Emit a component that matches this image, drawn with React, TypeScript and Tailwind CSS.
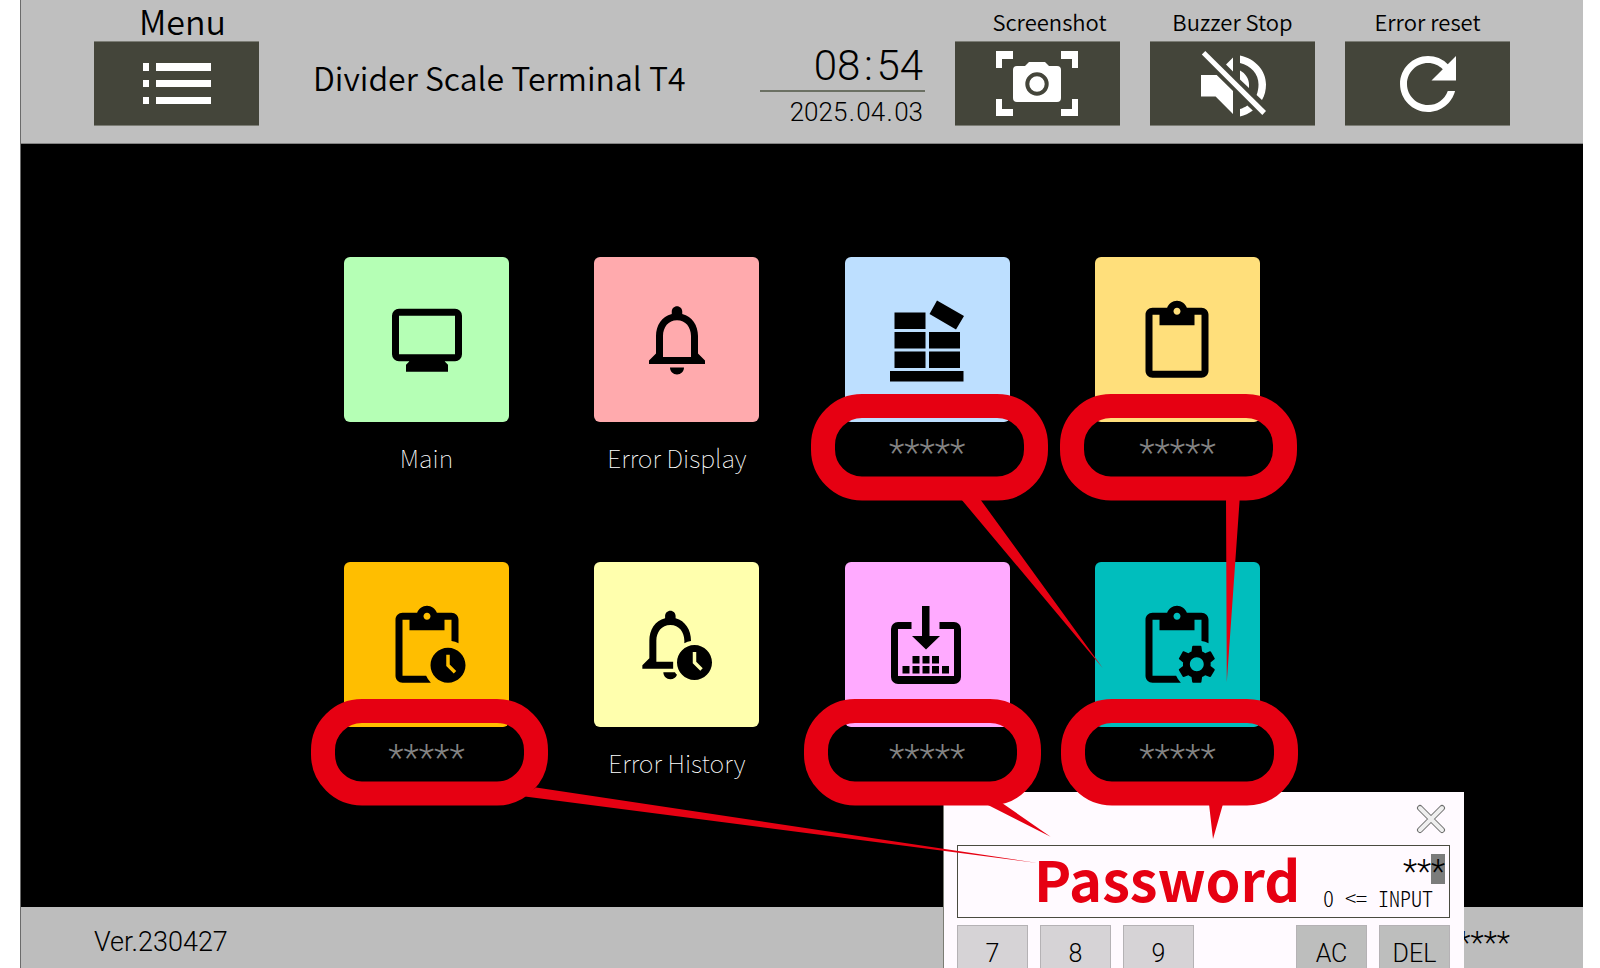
import type { ReactNode } from 'react';

const MASKED = '*****';

const CLIP_HOLE = 'M12 2c.55 0 1 .45 1 1s-.45 1-1 1-1-.45-1-1 .45-1 1-1z';
const CLIP_CUT =
  'M19 2h-4.180C14.4.84 13.3 0 12 0S9.6.84 9.180 2H5c-1.1 0-2 .9-2 2v16c0 1.1.9 2 2 2h8.100A6.800 6.800 0 0 1 11.750 20H5V4h2v3h10V4h2v6.100c.7.1 1.400.3 2 .6V4c0-1.100-.9-2-2-2z';
const GEAR =
  'M19.14 12.94c.04-.3.06-.61.06-.94 0-.32-.02-.64-.07-.94l2.03-1.58a.49.49 0 0 0 .12-.61l-1.92-3.32a.488.488 0 0 0-.59-.22l-2.39.96c-.5-.38-1.03-.7-1.62-.94l-.36-2.54a.484.484 0 0 0-.48-.41h-3.84c-.24 0-.43.17-.47.41l-.36 2.54c-.59.24-1.13.57-1.62.94l-2.39-.96c-.22-.08-.47 0-.59.22L2.74 8.87c-.12.21-.08.47.12.61l2.03 1.58c-.05.3-.09.63-.09.94s.02.64.07.94l-2.03 1.58a.49.49 0 0 0-.12.61l1.92 3.32c.12.22.37.29.59.22l2.39-.96c.5.38 1.03.7 1.62.94l.36 2.54c.05.24.24.41.48.41h3.84c.24 0 .44-.17.47-.41l.36-2.54c.59-.24 1.13-.56 1.62-.94l2.39.96c.22.08.47 0 .59-.22l1.92-3.32c.12-.22.07-.47-.12-.61l-2.01-1.58zM12 15.6c-1.98 0-3.6-1.62-3.6-3.6s1.62-3.6 3.6-3.6 3.6 1.62 3.6 3.6-1.62 3.6-3.6 3.6z';

interface IconProps {
  box?: string;
  children: ReactNode;
}

function Icon({ box = '0 0 24 24', children }: IconProps) {
  return (
    <svg viewBox={box} className="size-[84px]" fill="currentColor" fillRule="evenodd" aria-hidden="true">
      {children}
    </svg>
  );
}

function MonitorIcon() {
  return (
    <Icon box="0 0.2 24 24">
      <path d="M6 21v-2l1-1H4q-.825 0-1.412-.587T2 16V5q0-.825.588-1.412T4 3h16q.825 0 1.413.588T22 5v11q0 .825-.587 1.413T20 18h-3l1 1v2H6Zm-2-5h16V5H4v11Z" />
      <path d="M7 17h10v2H7z" />
    </Icon>
  );
}

function BellIcon() {
  return (
    <Icon box="0 0.4 24 24">
      <path d="M12 22c1.1 0 2-.9 2-2h-4c0 1.1.9 2 2 2zm6-6v-5c0-3.07-1.63-5.64-4.5-6.32V4c0-.83-.67-1.5-1.5-1.5s-1.5.67-1.5 1.5v.68C7.64 5.36 6 7.92 6 11v5l-2 2v1h16v-1l-2-2zm-2 1H8v-6c0-2.48 1.51-4.5 4-4.5s4 2.02 4 4.5v6z" />
    </Icon>
  );
}

function PalletIcon() {
  return (
    <Icon box="0 2 84 84">
      <path d="M9.500 15.500h31V32h-31zM9.500 35h31v16.500h-31zM9.500 54.500h31V71h-31zM44 35h31v16.500H44zM44 54.500h31V71H44zM5 74h73.500v10.500H5zM52 3.500 79 19 71 32.500 44.500 17z" />
    </Icon>
  );
}

function ClipboardIcon() {
  return (
    <Icon box="0 -0.5 24 24">
      <path d="M19 2h-4.18C14.4.84 13.3 0 12 0c-1.3 0-2.4.84-2.82 2H5c-1.1 0-2 .9-2 2v16c0 1.1.9 2 2 2h14c1.1 0 2-.9 2-2V4c0-1.1-.9-2-2-2zm-7 0c.55 0 1 .45 1 1s-.45 1-1 1-1-.45-1-1 .45-1 1-1zm7 18H5V4h2v3h10V4h2v16z" />
    </Icon>
  );
}

function ClipboardClockIcon() {
  return (
    <Icon box="0 -0.5 24 24">
      <path d={CLIP_CUT + CLIP_HOLE} />
      <path d="M18 12c-2.76 0-5 2.24-5 5s2.24 5 5 5 5-2.24 5-5-2.24-5-5-5zm1.65 7.350L17.500 17.200V14h1v2.790l1.850 1.850-.7.710z" />
    </Icon>
  );
}

function BellClockIcon() {
  return (
    <Icon box="0 0.3 24 24">
      <path d="M16 10.900v-.1C16 7.800 14.400 5.100 11.600 4.400V3.700c0-.83-.67-1.500-1.500-1.500S8.600 2.870 8.600 3.700v.7C5.700 5.100 4.100 7.700 4.100 10.800v5l-2 2v1H10.900V16.800H6.100v-6c0-2.480 1.510-4.500 4-4.500s4 2.020 4 4.500v.7c.6-.3 1.200-.5 1.900-.6zM8.100 19.800h3.300c.2.400.4.500.6.7-.3.800-1 1.300-1.900 1.300-1.100 0-2-.9-2-2z" />
      <path d="M17 12c-2.76 0-5 2.24-5 5s2.24 5 5 5 5-2.24 5-5-2.24-5-5-5zm1.65 7.350L16.500 17.200V14h1v2.790l1.850 1.850-.7.710z" />
    </Icon>
  );
}

function ImportIcon() {
  return (
    <Icon box="0 0 84 84">
      <path d="M26.500 18H13a7 7 0 0 0-7 7v48a7 7 0 0 0 7 7h56a7 7 0 0 0 7-7V25a7 7 0 0 0-7-7H54.500v7H69v47H13V25h13.500z" />
      <path d="M37 2h7.500v30H55L41 45.500 27 32h10z" />
      <path d="M27.500 52h7v7.500h-7zM37.500 52h7v7.500h-7zM47 52h7v7.500h-7zM17.500 62h7v7.500h-7zM27.500 62h7v7.500h-7zM37.500 62h7v7.500h-7zM47 62h7v7.500h-7zM57 62h7v7.500h-7z" />
    </Icon>
  );
}

function ClipboardGearIcon() {
  return (
    <Icon box="0 -0.5 24 24">
      <path d={CLIP_CUT + CLIP_HOLE} />
      <path transform="translate(11.06 10.1) scale(.55)" d={GEAR} />
    </Icon>
  );
}

function ListIcon() {
  return (
    <Icon box="0 0 84 84">
      <path d="M8 21h6v8H8zM8 38h6v7H8zM8 55h6v7H8zM21 21h55v8H21zM21 38h55v7H21zM21 55h55v7H21z" />
    </Icon>
  );
}

function CameraIcon() {
  return (
    <Icon box="1 0 84 84">
      <path d="M1 9h17v8H7v9H1zM66 9h17v17h-6v-9H66zM1 57h6v10h11v7H1zM77 57h6v17H66v-7h11z" />
      <path d="M22 24h8l4-4h16l4 4h8a4 4 0 0 1 4 4v28a4 4 0 0 1-4 4H22a4 4 0 0 1-4-4V28a4 4 0 0 1 4-4zM42 30.300a11.700 11.700 0 1 0 0 23.400 11.700 11.700 0 1 0 0-23.400zM42 34.300a7.700 7.700 0 1 1 0 15.400 7.700 7.700 0 1 1 0-15.400z" />
    </Icon>
  );
}

function MuteIcon() {
  return (
    <Icon box="0 0 84 84">
      <path d="M14.300 9 75 69l-3.700 4L10.800 12.500z" />
      <path d="M10 33h15.700L42 49v23L24.600 54.500H10zM42 15.500 35 22.500l7 7z" />
      <path d="M49 13.500C65 17 75 29 75 42.500c0 5.500-1.300 11-4 15.500l-5.400-5c1.300-3.500 1.900-7 1.900-10.500C67.500 32 60 23.500 49 21z" />
      <path d="M49 28.500c5.500 3 9 8 9 14v3.500l-9-8.500zM49 67c2.600-.7 5-1.800 7.300-3.500l5.500 5c-4 3-8 5-12.800 6z" />
    </Icon>
  );
}

function ReloadIcon() {
  return (
    <Icon>
      <path d="M17.65 6.35A7.958 7.958 0 0 0 12 4c-4.42 0-7.99 3.58-7.99 8s3.57 8 7.99 8c3.73 0 6.84-2.55 7.73-6h-2.08A5.99 5.99 0 0 1 12 18c-3.31 0-6-2.69-6-6s2.69-6 6-6c1.66 0 3.14.69 4.22 1.78L13 11h7V4l-2.35 2.35z" />
    </Icon>
  );
}

interface HeaderButtonProps {
  id: string;
  label: string;
  labelClass?: string;
  children: ReactNode;
}

function HeaderButton({ id, label, labelClass = 'text-[22px]', children }: HeaderButtonProps) {
  return (
    <div className="flex w-[165px] shrink-0 flex-col items-center">
      <span id={id} className={`h-[41px] leading-[42px] font-[350] whitespace-nowrap ${labelClass}`}>
        {label}
      </span>
      <button
        type="button"
        aria-labelledby={id}
        className="flex h-[85px] w-full items-center justify-center border-y border-[#7b7c74] bg-[#44453a] text-white"
      >
        {children}
      </button>
    </div>
  );
}

interface Tile {
  id: string;
  label: string;
  color: string;
  icon: ReactNode;
}

const TILES: Tile[] = [
  { id: 'main', label: 'Main', color: 'bg-[#b5ffb5]', icon: <MonitorIcon /> },
  { id: 'error-display', label: 'Error Display', color: 'bg-[#ffaaad]', icon: <BellIcon /> },
  { id: 'product', label: MASKED, color: 'bg-[#bddfff]', icon: <PalletIcon /> },
  { id: 'order', label: MASKED, color: 'bg-[#ffdf7b]', icon: <ClipboardIcon /> },
  { id: 'order-history', label: MASKED, color: 'bg-[#ffbe00]', icon: <ClipboardClockIcon /> },
  { id: 'error-history', label: 'Error History', color: 'bg-[#ffffad]', icon: <BellClockIcon /> },
  { id: 'import', label: MASKED, color: 'bg-[#ffaaff]', icon: <ImportIcon /> },
  { id: 'settings', label: MASKED, color: 'bg-[#00bebd]', icon: <ClipboardGearIcon /> },
];

function MenuTile({ tile }: { tile: Tile }) {
  const masked = tile.label === MASKED;
  return (
    <div className="flex h-[220px] w-[165px] flex-col items-center">
      <button
        type="button"
        aria-labelledby={tile.id}
        className={`flex size-[165px] items-center justify-center rounded-md pt-[2px] text-black ${tile.color}`}
      >
        {tile.icon}
      </button>
      <span
        id={tile.id}
        className={
          masked
            ? "mt-[13px] font-['Roboto',sans-serif] text-[36px] leading-9 font-light text-[#848484]"
            : 'mt-[17px] text-[25px] leading-9 font-thin whitespace-nowrap text-white'
        }
      >
        {tile.label}
      </span>
    </div>
  );
}

function Key({ label, color }: { label: string; color: string }) {
  return (
    <button
      type="button"
      className={`h-[56px] w-[71px] border border-[#b5b2b5] pt-[2px] font-['Roboto',sans-serif] text-[25px] leading-7 font-light text-black ${color}`}
    >
      {label}
    </button>
  );
}

function PasswordDialog() {
  return (
    <div
      role="dialog"
      aria-label="Password"
      className="absolute top-[792px] bottom-0 left-1/2 ml-[141px] w-[521px] overflow-hidden border-l border-[#7b7c74] bg-[#fffaff] pt-3 pr-[14px] pl-[13px]"
    >
      <div className="flex justify-end pr-1">
        <button type="button" aria-label="Close" className="size-[30px]">
          <svg viewBox="0 0 30 30" strokeLinecap="round" className="size-[30px]">
            <path d="M4 4 26 26M26 4 4 26" stroke="#6b6c6b" strokeWidth="6" />
            <path d="M4 4 26 26M26 4 4 26" stroke="#efefef" strokeWidth="4" />
          </svg>
        </button>
      </div>
      <div className="relative mt-[11px] h-[73px] border border-[#4a4b40] pt-[7px] pr-1">
        <span className="absolute top-2 right-1 h-[30px] w-[14px] bg-[#7b7c7b]" />
        <input
          type="text"
          readOnly
          value="***"
          aria-label="Password value"
          className="relative block h-8 w-full bg-transparent pt-1 text-right font-['Roboto',sans-serif] text-[33px] leading-7 font-light text-black outline-none"
        />
        <p className='pr-3 text-right text-[22px] leading-6 font-light whitespace-pre text-black [font-feature-settings:"hwid"]'>{'0 <= INPUT'}</p>
      </div>
      <div className="mt-[7px] flex gap-3">
        <Key label="7" color="bg-[#d6d3d6]" />
        <Key label="8" color="bg-[#d6d3d6]" />
        <Key label="9" color="bg-[#d6d3d6]" />
        <div className="ml-auto flex gap-3">
          <Key label="AC" color="bg-[#bdbebd]" />
          <Key label="DEL" color="bg-[#bdbebd]" />
        </div>
      </div>
    </div>
  );
}

const RINGS = [
  [811, 394],
  [1060, 394],
  [311, 699],
  [804, 699],
  [1061, 699],
];

// Callout rings and the pointers that lead to the password prompt
function Callouts() {
  return (
    <>
      <svg
        viewBox="302 390 1000 480"
        className="pointer-events-none absolute top-[390px] left-1/2 -ml-[500px] h-[480px] w-[1000px]"
        aria-hidden="true"
      >
        {RINGS.map(([x, y]) => (
          <rect key={`${x}-${y}`} x={x + 12} y={y + 12} width="213" height="82.5" rx="39" fill="none" stroke="#e60012" strokeWidth="24" />
        ))}
        <path
          fill="#e60012"
          d="M961 499h19L1102.700 668zM1226 499h13.700L1226.800 682zM536 787.500 525 796.500 1037.500 863zM986 804l16-1 48.600 33.700zM1209 804h14L1213 839z"
        />
      </svg>
      <p className="pointer-events-none absolute top-[840px] left-1/2 ml-[232px] text-[56px] leading-[76px] font-bold text-[#e60012]">
        Password
      </p>
    </>
  );
}

function Clock() {
  return (
    <div className="mr-[30px] ml-auto w-[165px] pt-[41px] text-right font-['Roboto',sans-serif] font-light">
      <p className="border-b-2 border-[#6b7063] pr-[2px] text-[42px] leading-[49px]">
        08<span className="inline-block w-4 text-center">:</span>54
      </p>
      <p className="pr-[2px] text-[26px] leading-10">
        2025<span className="inline-block w-[9px] text-center">.</span>04
        <span className="inline-block w-[9px] text-center">.</span>03
      </p>
    </div>
  );
}

export default function App() {
  return (
    <div className="flex min-h-screen bg-white pr-[17px] pl-5 font-['Noto_Sans_CJK_JP',sans-serif] text-black">
      <div className="relative flex flex-1 flex-col overflow-hidden border-l border-[#6b6b6b] bg-black">
        <header className="flex h-[144px] shrink-0 items-start border-b border-[#848484] bg-[#bfbfbf] px-[73px]">
          <HeaderButton id="menu" label="Menu" labelClass="pl-3 text-[34px]">
            <ListIcon />
          </HeaderButton>
          <h1 className="ml-[54px] pt-[55px] text-[32px] leading-[44px] font-[350] whitespace-nowrap">
            Divider Scale Terminal T4
          </h1>
          <Clock />
          <div className="flex gap-[30px]">
            <HeaderButton id="screenshot" label="Screenshot" labelClass="pl-6 text-[22px]">
              <CameraIcon />
            </HeaderButton>
            <HeaderButton id="buzzer" label="Buzzer Stop">
              <MuteIcon />
            </HeaderButton>
            <HeaderButton id="reset" label="Error reset">
              <ReloadIcon />
            </HeaderButton>
          </div>
        </header>

        <main className="flex flex-1 justify-center pt-[113px]">
          <div className="grid w-[916px] grid-cols-[repeat(4,165px)] content-start justify-between gap-y-[85px]">
            {TILES.map((tile) => (
              <MenuTile key={tile.id} tile={tile} />
            ))}
          </div>
        </main>

        <footer className="flex h-[61px] shrink-0 items-center justify-between bg-[#bdbdbd] px-[73px] pt-[10px] font-['Roboto',sans-serif] font-light">
          <span className="text-[27px]">Ver.230427</span>
          <span className="text-[31px] leading-8">{MASKED}</span>
        </footer>

        <PasswordDialog />
        <Callouts />
      </div>
    </div>
  );
}
